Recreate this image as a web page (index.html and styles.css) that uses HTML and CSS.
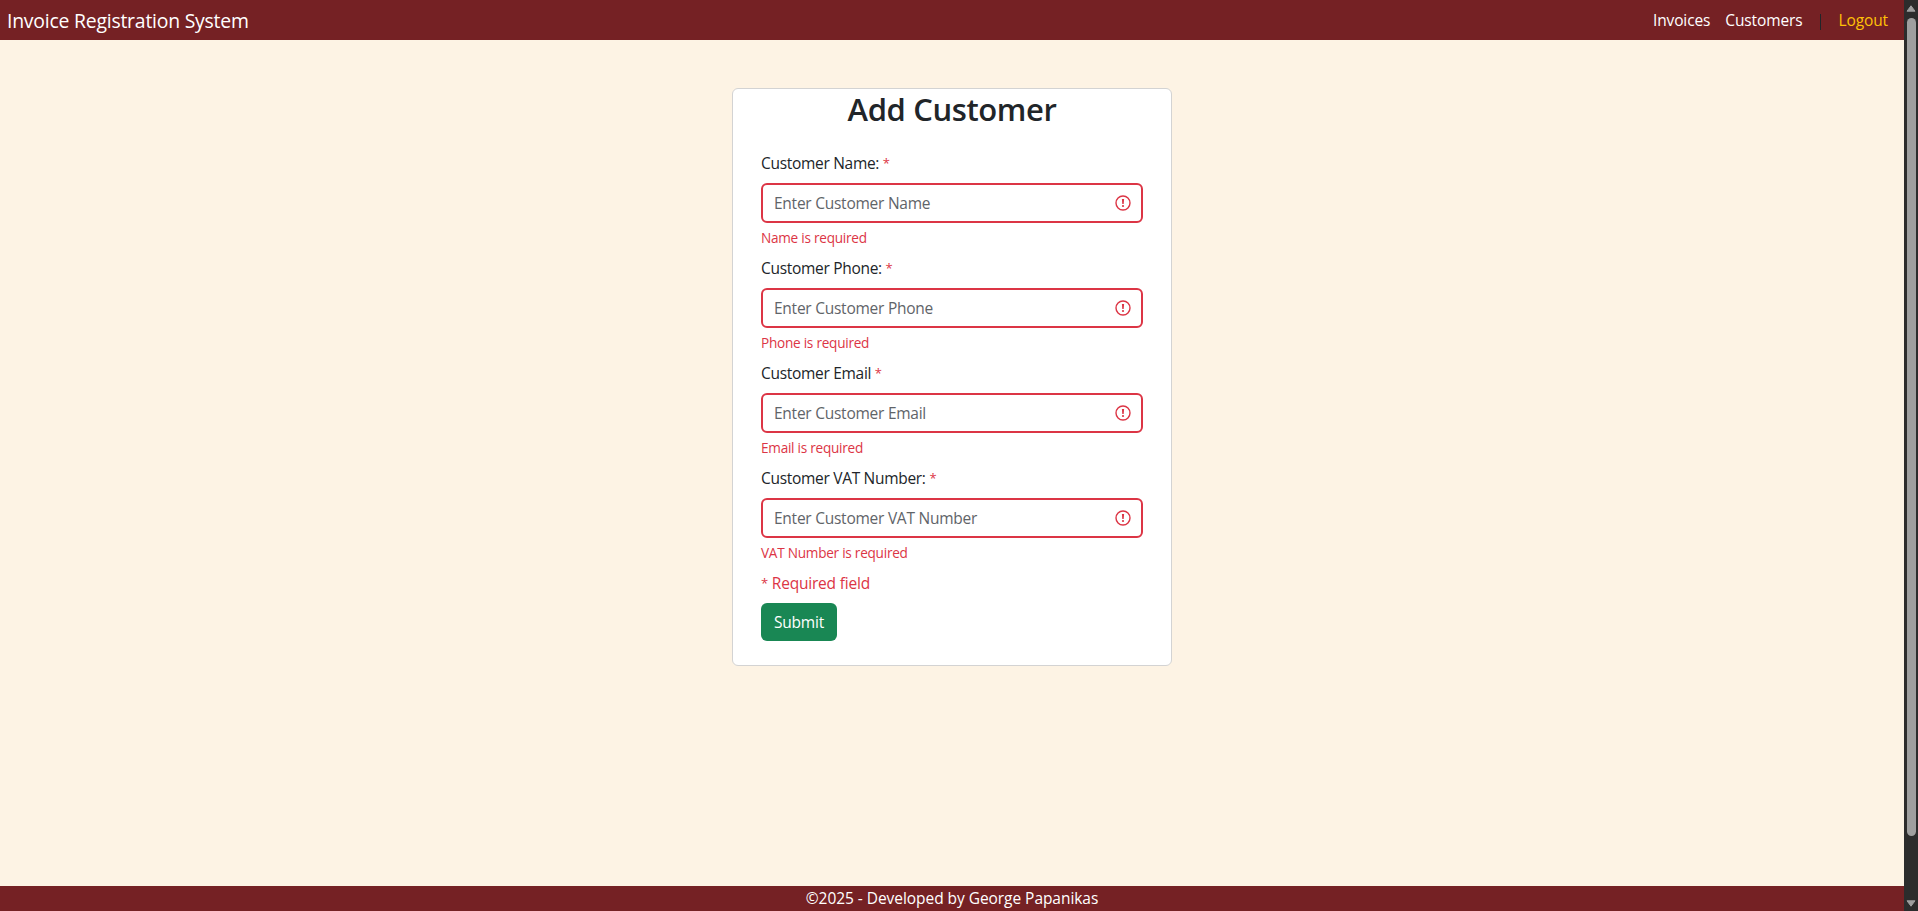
FILE: index.html
```html
<!DOCTYPE html>
<html lang="en">
<head>
<meta charset="utf-8">
<title>Add Customer</title>
<link rel="stylesheet" href="styles.css">
</head>
<body>
<svg class="sprite" aria-hidden="true">
  <symbol id="alert" viewBox="0 0 16 16">
    <circle cx="8" cy="8" r="7" fill="none" stroke="#dc3545" stroke-width="1.4"/>
    <path d="M6.9 3.9h2.2L8.7 9H7.3z" fill="#dc3545"/>
    <circle cx="8" cy="11" r="1.1" fill="#dc3545"/>
  </symbol>
</svg>
<div class="page">
  <header class="navbar">
    <a class="brand">Invoice Registration System</a>
    <nav class="links">
      <a class="invoices">Invoices</a>
      <a class="customers">Customers</a>
      <span class="divider"></span>
      <a class="logout">Logout</a>
    </nav>
  </header>
  <main class="main">
    <form class="card" novalidate>
      <h1>Add Customer</h1>
      <div class="field">
        <label>Customer Name: <span class="star">*</span></label>
        <div class="control"><input type="text" placeholder="Enter Customer Name"><svg class="icon"><use href="#alert"/></svg></div>
        <p class="feedback">Name is required</p>
      </div>
      <div class="field">
        <label>Customer Phone: <span class="star">*</span></label>
        <div class="control"><input type="text" placeholder="Enter Customer Phone"><svg class="icon"><use href="#alert"/></svg></div>
        <p class="feedback">Phone is required</p>
      </div>
      <div class="field">
        <label>Customer Email <span class="star">*</span></label>
        <div class="control"><input type="text" placeholder="Enter Customer Email"><svg class="icon"><use href="#alert"/></svg></div>
        <p class="feedback">Email is required</p>
      </div>
      <div class="field">
        <label>Customer VAT Number: <span class="star">*</span></label>
        <div class="control"><input type="text" placeholder="Enter Customer VAT Number"><svg class="icon"><use href="#alert"/></svg></div>
        <p class="feedback">VAT Number is required</p>
      </div>
      <p class="required"><span class="star">*</span> Required field</p>
      <button class="submit" type="button">Submit</button>
    </form>
  </main>
  <footer class="footer">©2025 - Developed by George Papanikas</footer>
</div>
<div class="scrollbar">
  <svg class="arrow" viewBox="0 0 10 7"><path d="M5 .8 9 6.2H1z" fill="#9f9f9f" stroke="#9f9f9f" stroke-linejoin="round"/></svg>
  <div class="thumb"></div>
  <svg class="arrow down" viewBox="0 0 10 7"><path d="M1 .8h8L5 6.2z" fill="#9f9f9f" stroke="#9f9f9f" stroke-linejoin="round"/></svg>
</div>
</body>
</html>
```
FILE: styles.css
```css
* { box-sizing: border-box; }
body {
  margin: 0;
  height: 911px;
  display: flex;
  overflow: hidden;
  font-family: "Open Sans", "Noto Sans", sans-serif;
  font-size: 15.5px;
  line-height: 24px;
  letter-spacing: -0.3px;
  color: #212529;
  background: #fdf3e4;
}
p, h1 { margin: 0; }
.sprite { position: absolute; width: 0; height: 0; }
.page { flex: 1; display: flex; flex-direction: column; }
.navbar {
  height: 40px;
  padding: 0 16px 0 7px;
  display: flex;
  align-items: center;
  justify-content: space-between;
  background: #752124;
  color: #fff;
}
.brand { font-size: 19.4px; letter-spacing: -0.22px; line-height: 30px; margin-top: 2px; }
.links { display: flex; align-items: center; letter-spacing: -0.12px; }
.customers { margin-left: 15px; }
.divider { width: 1px; height: 16px; margin: 3px 18px 0 17px; background: #212529; }
.logout { color: #ffc107; }
.main { flex: 1; padding-top: 48px; display: flex; justify-content: center; align-items: flex-start; }
.card {
  width: 440px;
  height: 578px;
  padding: 0 28px;
  background: #fff;
  border: 1px solid #d3d3d3;
  border-radius: 6px;
}
h1 {
  font-size: 31px;
  font-weight: 600;
  line-height: 38px;
  padding-top: 1px;
  margin-bottom: 23px;
  text-align: center;
  letter-spacing: -0.4px;
}
.field { margin-bottom: 8px; }
label { display: block; margin-bottom: 8px; }
.star { color: #dc3545; font-size: 13px; line-height: 1; position: relative; top: -1px; }
.control {
  height: 40px;
  padding: 0 10px 0 11px;
  display: flex;
  align-items: center;
  border: 2px solid #dc3545;
  border-radius: 6px;
}
input {
  flex: 1;
  min-width: 0;
  padding: 0;
  border: 0;
  outline: 0;
  background: none;
  font: inherit;
  letter-spacing: -0.25px;
}
input::placeholder { color: #5f6469; opacity: 1; }
.icon { width: 16px; height: 16px; }
.feedback { margin-top: 4px; font-size: 13.6px; line-height: 21px; letter-spacing: -0.25px; color: #dc3545; }
.required { color: #dc3545; margin-bottom: 8px; letter-spacing: -0.2px; }
.submit {
  display: block;
  width: 76px;
  height: 38px;
  padding: 0;
  border: 0;
  border-radius: 6px;
  background: #198754;
  color: #fff;
  font: inherit;
  letter-spacing: -0.2px;
}
.footer { height: 25px; line-height: 25px; letter-spacing: -0.05px; text-align: center; background: #752124; color: #fff; }
.scrollbar {
  width: 14px;
  padding: 5px 0 4px;
  display: flex;
  flex-direction: column;
  align-items: center;
  background: #2c2c2c;
}
.arrow { width: 10px; height: 7px; }
.thumb { width: 9px; height: 818px; margin-top: 6px; border-radius: 5px; background: #9f9f9f; }
.down { margin-top: auto; }
```
